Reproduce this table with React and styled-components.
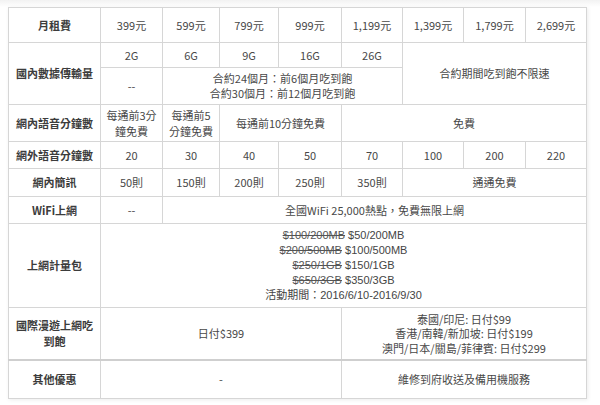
import React from 'react'
import styled, { createGlobalStyle } from 'styled-components'

const GlobalStyle = createGlobalStyle`
  html, body {
    margin: 0;
    padding: 0;
    background: #fff;
  }
  body {
    font-family: 'Noto Sans CJK TC', 'Noto Sans', sans-serif;
    color: #444;
  }
`

const widths = [92, 62, 57, 59, 63, 61, 61, 62, 61]

const Page = styled.div`
  padding: 7px 0 0 8px;
  background: linear-gradient(#f2f2f2, #fff 7px);
  height: 405px;
  box-sizing: border-box;
`

const Table = styled.table`
  border-collapse: collapse;
  table-layout: fixed;
  width: 578px;
  background: #fff;
  box-shadow: 1px 1px 4px rgba(0, 0, 0, 0.08);
`

const Row = styled.tr`
  height: ${(p) => p.$h}px;
  border-bottom: ${(p) => (p.$thick ? '2px solid #cfcfcf' : 'none')};
`

const Cell = styled.td`
  border: 1px solid #d6d6d6;
  padding: 0 5px;
  text-align: center;
  vertical-align: middle;
  font-size: 11px;
  line-height: ${(p) => p.$lh || 15}px;
  color: #484848;
  word-break: break-all;
`

const Label = styled(Cell)`
  font-weight: 600;
  color: #3c3c3c;
  padding: 0 4px;
`

const Strike = styled.span`
  text-decoration: line-through;
  color: #555;
`

const Pack = styled.div`
  font-family: 'Liberation Sans', 'Noto Sans CJK TC', sans-serif;
  font-size: 11px;
  line-height: 15px;
  color: #444;
`

const prices = ['399元', '599元', '799元', '999元', '1,199元', '1,399元', '1,799元', '2,699元']
const outside = ['20', '30', '40', '50', '70', '100', '200', '220']
const sms = ['50則', '150則', '200則', '250則', '350則']
const packs = [
  ['$100/200MB', '$50/200MB'],
  ['$200/500MB', '$100/500MB'],
  ['$250/1GB', '$150/1GB'],
  ['$650/3GB', '$350/3GB'],
]

export default function App() {
  return (
    <>
      <GlobalStyle />
      <Page>
        <Table>
          <colgroup>
            {widths.map((w, i) => (
              <col key={i} style={{ width: w }} />
            ))}
          </colgroup>
          <tbody>
            <Row $h={35}>
              <Label>月租費</Label>
              {prices.map((p) => (
                <Cell key={p}>{p}</Cell>
              ))}
            </Row>
            <Row $h={25}>
              <Label rowSpan={2}>國內數據傳輸量</Label>
              <Cell>2G</Cell>
              <Cell>6G</Cell>
              <Cell>9G</Cell>
              <Cell>16G</Cell>
              <Cell>26G</Cell>
              <Cell colSpan={3} rowSpan={2}>合約期間吃到飽不限速</Cell>
            </Row>
            <Row $h={37}>
              <Cell>--</Cell>
              <Cell colSpan={4} $lh={15}>
                合約24個月：前6個月吃到飽
                <br />
                合約30個月：前12個月吃到飽
              </Cell>
            </Row>
            <Row $h={37}>
              <Label>網內語音分鐘數</Label>
              <Cell $lh={16}>每通前3分鐘免費</Cell>
              <Cell $lh={16}>每通前5分鐘免費</Cell>
              <Cell colSpan={2}>每通前10分鐘免費</Cell>
              <Cell colSpan={4}>免費</Cell>
            </Row>
            <Row $h={27}>
              <Label>網外語音分鐘數</Label>
              {outside.map((v) => (
                <Cell key={v}>{v}</Cell>
              ))}
            </Row>
            <Row $h={28}>
              <Label>網內簡訊</Label>
              {sms.map((v) => (
                <Cell key={v}>{v}</Cell>
              ))}
              <Cell colSpan={3}>通通免費</Cell>
            </Row>
            <Row $h={27}>
              <Label>WiFi上網</Label>
              <Cell>--</Cell>
              <Cell colSpan={7}>全國WiFi 25,000熱點，免費無限上網</Cell>
            </Row>
            <Row $h={84}>
              <Label>上網計量包</Label>
              <Cell colSpan={8}>
                <Pack>
                  {packs.map(([a, b]) => (
                    <div key={a}>
                      <Strike>{a}</Strike> {b}
                    </div>
                  ))}
                  <div>活動期間：2016/6/10-2016/9/30</div>
                </Pack>
              </Cell>
            </Row>
            <Row $h={52} $thick>
              <Label $lh={16}>國際漫遊上網吃到飽</Label>
              <Cell colSpan={4}>日付$399</Cell>
              <Cell colSpan={4} $lh={14.5}>
                泰國/印尼: 日付$99
                <br />
                香港/南韓/新加坡: 日付$199
                <br />
                澳門/日本/關島/菲律賓: 日付$299
              </Cell>
            </Row>
            <Row $h={39}>
              <Label>其他優惠</Label>
              <Cell colSpan={4}>-</Cell>
              <Cell colSpan={4}>維修到府收送及備用機服務</Cell>
            </Row>
          </tbody>
        </Table>
      </Page>
    </>
  )
}
